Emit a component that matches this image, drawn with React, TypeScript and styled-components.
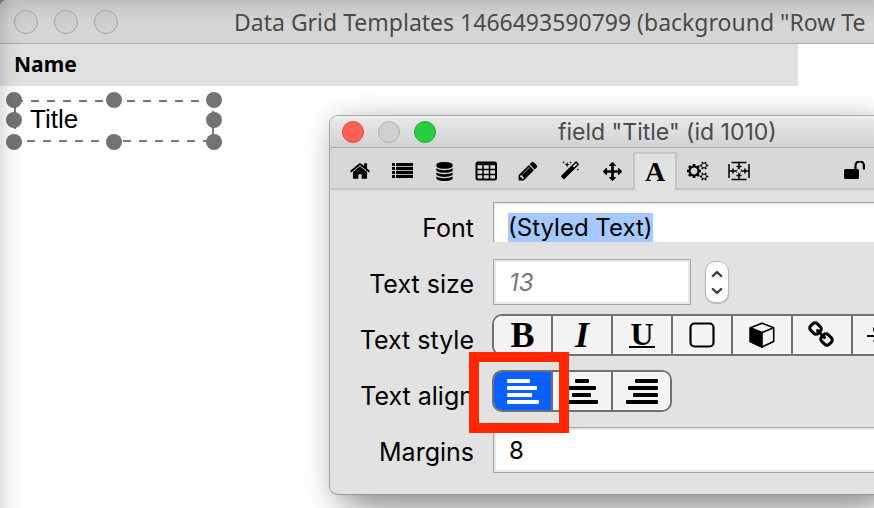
import React, { useEffect, useRef } from "react";
import styled, { createGlobalStyle } from "styled-components";

const GlobalStyle = createGlobalStyle`
  * { box-sizing: border-box; }
  html, body { margin: 0; padding: 0; }
  body { background: #777; font-family: Inter, "Liberation Sans", sans-serif; }
  button, input { font-family: inherit; margin: 0; }
`;

const Window = styled.main`
  position: relative;
  min-height: 100vh;
  overflow: clip;
  background: #fff;
  border-top-left-radius: 8px;
`;

const EdgeShade = styled.div`
  position: absolute;
  inset: 0 auto 0 0;
  width: 24px;
  background: linear-gradient(90deg, rgba(0, 0, 0, 0.12), rgba(0, 0, 0, 0.04) 40%, rgba(0, 0, 0, 0));
  pointer-events: none;
`;

const TitleBar = styled.header`
  display: flex;
  align-items: center;
  height: 44px;
  padding-left: 14px;
  background: linear-gradient(#bfbfbf, #cccccc 25%, #d6d6d6 60%, #d4d4d4);
  border-bottom: 1px solid #a9a9a9;
`;

const Lights = styled.div<{ $gap: number }>`
  display: flex;
  flex: none;
  gap: ${(p) => p.$gap}px;
`;

const Light = styled.button<{ $size: number; $fill: string; $edge: string }>`
  width: ${(p) => p.$size}px;
  height: ${(p) => p.$size}px;
  padding: 0;
  border-radius: 50%;
  border: 1px solid ${(p) => p.$edge};
  background: ${(p) => p.$fill};
`;

const WindowTitle = styled.h1`
  margin: 0 0 0 116px;
  font: 400 23px/32px "Noto Sans", sans-serif;
  color: #4a4a4a;
  white-space: nowrap;
`;

const ColumnHeader = styled.div`
  height: 42px;
  margin-right: 76px;
  padding-left: 14px;
  background: #e0e0e0;
  font: 700 21px/40px "Noto Sans", sans-serif;
  color: #000;
`;

const SelectedField = styled.div`
  position: relative;
  width: 222px;
  padding: 18px 0 0 30px;
  font: 400 26px/30px "Liberation Sans", sans-serif;
  color: #000;
`;

const Handles = styled.svg`
  position: absolute;
  top: 0;
  left: 0;
`;

const Palette = styled.section`
  position: absolute;
  top: 115px;
  left: 329px;
  right: 0;
  border: 1px solid #a6a6a6;
  border-right: 0;
  border-bottom-color: #949494;
  border-radius: 9px 0 0 9px;
  background: #e2e2e2;
  box-shadow: 20px 14px 34px rgba(0, 0, 0, 0.34), 0 6px 28px rgba(0, 0, 0, 0.2);
`;

const PaletteBar = styled.header`
  display: flex;
  align-items: center;
  height: 32px;
  padding-left: 12px;
  border-top-left-radius: 8px;
  border-bottom: 1px solid #a9a9a9;
  background: linear-gradient(#f2f2f2, #e8e8e8 10%, #d2d2d2);
`;

const PaletteTitle = styled.h2`
  margin: 0 0 0 122px;
  font-weight: 400;
  font-size: 23px;
  line-height: 28px;
  color: #4a4a4a;
  white-space: nowrap;
`;

const Toolbar = styled.nav`
  display: flex;
  align-items: flex-end;
  height: 42px;
  padding-left: 9px;
  background: #d8d8d8;
  box-shadow: inset 0 -2px #c4c4c4;
`;

const Tool = styled.button<{ $active?: boolean; $gapBefore?: number }>`
  display: flex;
  align-items: center;
  justify-content: center;
  flex: none;
  width: ${(p) => (p.$active ? 44 : 42)}px;
  height: 38px;
  margin-left: ${(p) => p.$gapBefore ?? 0}px;
  padding: 0;
  color: #000;
  border: ${(p) => (p.$active ? "2px solid #c4c4c4" : "0")};
  border-bottom: 0;
  background: ${(p) => (p.$active ? "#e2e2e2" : "transparent")};
`;

const SerifGlyph = styled.span<{ $size: number; $italic?: boolean }>`
  font: ${(p) => (p.$italic ? "italic" : "normal")} 700 ${(p) => p.$size}px/30px "Liberation Serif", serif;
`;

const UnderlinedGlyph = styled(SerifGlyph)`
  width: 26px;
  line-height: 24px;
  border-bottom: 2px solid #000;
`;

const Form = styled.form`
  padding: 9px 0 15px;
`;

const Row = styled.div<{ $top: number }>`
  display: grid;
  grid-template-columns: 144px 1fr;
  column-gap: 19px;
  align-items: start;
  height: 56px;
  padding-top: ${(p) => p.$top}px;
`;

const Label = styled.label<{ $top: number }>`
  font-size: 25px;
  line-height: 58px;
  margin-top: -${(p) => p.$top}px;
  text-align: right;
  white-space: nowrap;
  color: #000;
`;

const Field = styled.input<{ $width?: string }>`
  width: ${(p) => p.$width ?? "100%"};
  height: 46px;
  padding: 0 15px;
  border: 1px solid #a5a5a5;
  border-radius: 0;
  outline: none;
  background: #fff;
  box-shadow: inset 0 0 0 2px #e6e6e6;
  font-size: 24px;
  color: #000;
  &::placeholder { color: #777; font-style: italic; opacity: 1; }
`;

const WideField = styled(Field)`
  border-right: 0;
  box-shadow: inset 2px 2px #e6e6e6, inset 0 -2px #e6e6e6;
`;

const FontField = styled(Field)`
  height: 40px;
  padding: 9px 14px 0;
  border-bottom: 0;
  border-right: 0;
  box-shadow: inset 1px 1px #e6e6e6;
  line-height: 30px;
  caret-color: transparent;
  &::selection { background: #a5c9ff; color: #000; }
`;

const Inline = styled.div`
  display: flex;
  align-items: center;
  gap: 14px;
`;

const Stepper = styled.div`
  display: flex;
  flex-direction: column;
  width: 24px;
  height: 42px;
  padding: 3px 0;
  border: 1px solid #b9b9b9;
  border-radius: 10px;
  background: #fff;
  box-shadow: 0 1px 1px rgba(0, 0, 0, 0.2);
`;

const StepButton = styled.button`
  display: flex;
  flex: 1;
  align-items: center;
  justify-content: center;
  padding: 0;
  border: 0;
  background: transparent;
`;

const Segments = styled.div`
  display: flex;
  width: max-content;
  height: 42px;
  margin-left: -1px;
  border: 2px solid #707070;
  border-radius: 10px;
  overflow: hidden;
`;

const Segment = styled.button<{ $on?: boolean }>`
  display: flex;
  align-items: center;
  justify-content: center;
  width: 60px;
  padding: 0;
  border: 0;
  border-left: 2px solid #707070;
  background: ${(p) => (p.$on ? "#0a60ff" : "#f4f4f4")};
  color: ${(p) => (p.$on ? "#fff" : "#000")};
  &:first-child { width: 57px; border-left: 0; }
  &:last-child { width: 59px; }
`;

const Callout = styled.div`
  position: absolute;
  top: 352px;
  left: 469px;
  width: 100px;
  height: 81px;
  border: 10px solid #ff2600;
  pointer-events: none;
`;

const paths = {
  home: "M1472 992v480q0 26-19 45t-45 19h-384v-384h-256v384h-384q-26 0-45-19t-19-45v-480q0-1 .5-3t.5-3l575-474 575 474q1 2 1 6zm223-69l-62 74q-8 9-21 11h-3q-13 0-21-7l-692-577-692 577q-12 8-24 7-13-2-21-11l-62-74q-8-10-7-23.5t11-21.5l719-599q32-26 76-26t76 26l244 204v-195q0-14 9-23t23-9h192q14 0 23 9t9 23v408l219 182q10 8 11 21.5t-7 23.5z",
  database: "M896 768q237 0 443-43t325-127v170q0 69-103 128t-280 93.500-385 34.500-385-34.500-280-93.500-103-128v-170q119 84 325 127t443 43zm0 768q237 0 443-43t325-127v170q0 69-103 128t-280 93.500-385 34.500-385-34.500-280-93.500-103-128v-170q119 84 325 127t443 43zm0-384q237 0 443-43t325-127v170q0 69-103 128t-280 93.500-385 34.500-385-34.500-280-93.500-103-128v-170q119 84 325 127t443 43zm0-1152q208 0 385 34.500t280 93.500 103 128v128q0 69-103 128t-280 93.500-385 34.500-385-34.500-280-93.500-103-128v-128q0-69 103-128t280-93.500 385-34.500z",
  pencil: "M491 1536l91-91-235-235-91 91v107h128v128h107zm523-928q0-22-22-22-10 0-17 7l-542 542q-7 7-7 17 0 22 22 22 10 0 17-7l542-542q7-7 7-17zm-54-192l416 416-832 832h-416v-416zm683 96q0 53-37 90l-166 166-416-416 166-165q36-38 90-38 53 0 91 38l235 234q37 39 37 91z",
  wand: "M1254 581l293-293-107-107-293 293zm447-293q0 27-18 45l-1286 1286q-18 18-45 18t-45-18l-198-198q-18-18-18-45t18-45l1286-1286q18-18 45-18t45 18l198 198q18 18 18 45zm-1351-190l98 30-98 30-30 98-30-98-98-30 98-30 30-98zm350 162l196 60-196 60-60 196-60-196-196-60 196-60 60-196zm930 478l98 30-98 30-30 98-30-98-98-30 98-30 30-98zm-640-640l98 30-98 30-30 98-30-98-98-30 98-30 30-98z",
  move: "M1792 896q0 26-19 45l-256 256q-19 19-45 19t-45-19-19-45v-128h-384v384h128q26 0 45 19t19 45-19 45l-256 256q-19 19-45 19t-45-19l-256-256q-19-19-19-45t19-45 45-19h128v-384h-384v128q0 26-19 45t-45 19-45-19l-256-256q-19-19-19-45t19-45l256-256q19-19 45-19t45 19 19 45v128h384v-384h-128q-26 0-45-19t-19-45 19-45l256-256q19-19 45-19t45 19l256 256q19 19 19 45t-19 45-45 19h-128v384h384v-128q0-26 19-45t45-19 45 19l256 256q19 19 19 45z",
  link: "M1456 1216q0-40-28-68l-208-208q-28-28-68-28-42 0-72 32 3 3 19 18.500t21.500 21.500 15 19 13 25.500 3.500 27.500q0 40-28 68t-68 28q-15 0-27.500-3.500t-25.500-13-19-15-21.500-21.500-18.500-19q-33 31-33 73 0 40 28 68l206 207q27 27 68 27 40 0 68-26l147-146q28-28 28-67zm-703-705q0-40-28-68l-206-207q-28-28-68-28-39 0-68 27l-147 146q-28 28-28 67 0 40 28 68l208 208q27 27 68 27 42 0 72-31-3-3-19-18.500t-21.500-21.500-15-19-13-25.500-3.500-27.500q0-40 28-68t68-28q15 0 27.500 3.500t25.500 13 19 15 21.500 21.500 18.500 19q33-31 33-73zm895 705q0 120-85 203l-147 146q-83 83-203 83-121 0-204-85l-206-207q-83-83-83-203 0-123 88-209l-88-88q-86 88-208 88-120 0-204-84l-208-208q-84-84-84-204t85-203l147-146q83-83 203-83 121 0 204 85l206 207q83 83 83 203 0 123-88 209l88 88q86-88 208-88 120 0 204 84l208 208q84 84 84 204z",
};

const Glyph = ({ name, size }: { name: keyof typeof paths; size: number }) => (
  <svg width={size} height={size} viewBox="0 0 1792 1792" fill="currentColor" aria-hidden="true">
    <path d={paths[name]} />
  </svg>
);

const ListIcon = () => (
  <svg width="22" height="18" viewBox="0 0 22 18" aria-hidden="true">
    <path d="M5 4.500h17M5 8.500h17M5 12.500h17" stroke="#a9b0ac" strokeWidth="2" />
    {[1, 5, 9, 13].map((y) => (
      <g key={y}>
        <rect x="1" y={y} width="3" height="3" />
        <rect x="5" y={y} width="17" height="3" />
      </g>
    ))}
  </svg>
);

const TableIcon = () => (
  <svg width="22" height="20" viewBox="0 0 22 20" fill="none" stroke="#000" strokeWidth="1.500" aria-hidden="true">
    <rect x="1.500" y="1.500" width="19.500" height="17" rx="1.500" strokeWidth="2" />
    <path d="M2 3.200h19" strokeWidth="2" />
    <path d="M2 8.500h19M2 13.500h19M8 4v14M14.500 4v14" />
  </svg>
);

const Gear = ({ x, y, r, teeth, hub }: { x: number; y: number; r: number; teeth: number; hub: number }) => (
  <g transform={`translate(${x} ${y})`} fill="none" stroke="#000">
    <circle r={(r + hub) / 2 - 0.3} strokeWidth={r - hub - 0.6} />
    {Array.from({ length: teeth }, (_, i) => (
      <path
        key={i}
        d={`M0 ${-r + 1.4}V${-r - 0.8}`}
        strokeWidth={r * 0.44}
        transform={`rotate(${(360 / teeth) * i + (teeth === 6 ? 30 : 0)})`}
      />
    ))}
  </g>
);

const GearsIcon = () => (
  <svg width="22" height="20" viewBox="0 0 22 20" aria-hidden="true">
    <Gear x={7} y={10} r={6.2} teeth={8} hub={3.4} />
    <Gear x={17} y={4.5} r={3.5} teeth={6} hub={2} />
    <Gear x={17} y={15.5} r={3.5} teeth={6} hub={2} />
  </svg>
);

const ResizeIcon = () => (
  <svg width="24" height="20" viewBox="0 0 24 20" fill="none" stroke="#000" strokeWidth="1.500" aria-hidden="true">
    <path d="M3.500 1.500h15M3.500 18.500h15M1 3v14M21 3v14" />
    <path d="M1 10h8M13 10h8M11 2v6M11 12v6" />
    <path d="M5 7.500v5M17 7.500v5M8.500 5.500h5M8.500 14.500h5" />
    <rect x="9" y="8" width="4" height="4" strokeWidth="1" stroke="#555" strokeDasharray="1 1" />
  </svg>
);

const UnlockIcon = () => (
  <svg width="22" height="20" viewBox="0 0 22 20" aria-hidden="true">
    <rect x="1" y="8" width="15" height="10" rx="1.500" />
    <path d="M12.500 9V4.500a4.200 4.200 0 0 1 8.400 0v3.200" fill="none" stroke="#000" strokeWidth="2.200" strokeLinecap="round" />
  </svg>
);

const BoxIcon = () => (
  <svg width="26" height="26" viewBox="0 0 26 26" aria-hidden="true">
    <rect x="1.500" y="1.500" width="23" height="23" rx="4" fill="none" stroke="#000" strokeWidth="2.200" />
  </svg>
);

const CubeIcon = () => (
  <svg width="26" height="26" viewBox="0 0 26 26" fill="none" stroke="#000" strokeWidth="1.600" strokeLinejoin="round" aria-hidden="true">
    <path d="M13 1.200L24.700 5.800V19.500L13 25L1.300 19.500V5.800Z" />
    <path d="M1.300 5.800L13 10.500V25L1.300 19.500Z" fill="#000" />
    <path d="M13 10.500L24.700 5.800" />
  </svg>
);

const StrikeIcon = () => (
  <svg width="30" height="28" viewBox="0 0 30 28" fill="none" stroke="#000" aria-hidden="true">
    <path d="M0 15h30" strokeWidth="2" />
    <path d="M22 4v5M22 7C20 3 9 2 7 8c0 4 5 6 9 7 7 2 7 10-1 10-5 0-7-3-8-6" strokeWidth="2" />
  </svg>
);

const alignBars: Record<string, number[][]> = {
  left: [[0, 23], [0, 30], [0, 25], [0, 32]],
  center: [[9, 14], [2, 28], [6, 19], [0, 32]],
  right: [[9, 23], [2, 30], [7, 25], [0, 32]],
};

const AlignIcon = ({ kind }: { kind: string }) => (
  <svg width="32" height="25" viewBox="0 0 32 25" fill="currentColor" aria-hidden="true">
    {alignBars[kind].map(([x, w], i) => (
      <rect key={i} x={x} y={i * 7} width={w} height="4" rx="1" />
    ))}
  </svg>
);

const Chevron = ({ up }: { up?: boolean }) => (
  <svg width="12" height="8" viewBox="0 0 12 8" fill="none" stroke="#3c3c3c" strokeWidth="2.400" strokeLinecap="round" strokeLinejoin="round" aria-hidden="true">
    <path d={up ? "M1.800 6L6 2l4.200 4" : "M1.800 2L6 6l4.200-4"} />
  </svg>
);

const handlePoints = [
  [14, 14], [114, 14], [214, 14],
  [14, 34], [214, 34],
  [14, 56], [114, 56], [214, 56],
];

export default function App() {
  const fontRef = useRef<HTMLInputElement>(null);
  useEffect(() => {
    fontRef.current?.focus({ preventScroll: true });
    fontRef.current?.select();
  }, []);

  return (
    <>
      <GlobalStyle />
      <Window>
        <TitleBar>
          <Lights $gap={16}>
            {["Close", "Minimize", "Zoom"].map((n) => (
              <Light key={n} type="button" aria-label={n} $size={24} $fill="linear-gradient(#c8c8c8, #d2d2d2)" $edge="#a2a2a2" />
            ))}
          </Lights>
          <WindowTitle>Data Grid Templates 1466493590799 (background "Row Te</WindowTitle>
        </TitleBar>
        <ColumnHeader>Name</ColumnHeader>
        <SelectedField>
          Title
          <Handles width="226" height="68" viewBox="0 0 226 68" aria-hidden="true">
            <g fill="none" stroke="#7b7878" strokeWidth="2">
              <path d="M15 15H213" strokeDasharray="8 8" />
              <path d="M11 55H213" strokeDasharray="8 8" />
              <path d="M15 20V43M213 25V55" />
            </g>
            {handlePoints.map(([x, y]) => (
              <circle key={`${x}-${y}`} cx={x} cy={y} r="8" fill="#767272" />
            ))}
          </Handles>
        </SelectedField>
        <EdgeShade />

        <Palette>
          <PaletteBar>
            <Lights $gap={14}>
              <Light type="button" aria-label="Close palette" $size={22} $fill="#ff6058" $edge="#e2483f" />
              <Light type="button" aria-label="Minimize palette" $size={22} $fill="#d0d0d0" $edge="#aeaeae" />
              <Light type="button" aria-label="Zoom palette" $size={22} $fill="#28cd41" $edge="#1eac2c" />
            </Lights>
            <PaletteTitle>field "Title" (id 1010)</PaletteTitle>
          </PaletteBar>
          <Toolbar>
            <Tool type="button" aria-label="Basic"><Glyph name="home" size={22} /></Tool>
            <Tool type="button" aria-label="Contents"><ListIcon /></Tool>
            <Tool type="button" aria-label="Custom properties"><Glyph name="database" size={19} /></Tool>
            <Tool type="button" aria-label="Table"><TableIcon /></Tool>
            <Tool type="button" aria-label="Colors"><Glyph name="pencil" size={22} /></Tool>
            <Tool type="button" aria-label="Effects"><Glyph name="wand" size={20} /></Tool>
            <Tool type="button" aria-label="Position"><Glyph name="move" size={19} /></Tool>
            <Tool type="button" $active><SerifGlyph $size={28}>A</SerifGlyph></Tool>
            <Tool type="button" aria-label="Advanced"><GearsIcon /></Tool>
            <Tool type="button" aria-label="Geometry"><ResizeIcon /></Tool>
            <Tool type="button" aria-label="Unlock" $gapBefore={72}><UnlockIcon /></Tool>
          </Toolbar>
          <Form>
            <Row $top={3}>
              <Label htmlFor="font" $top={3}>Font</Label>
              <FontField id="font" ref={fontRef} defaultValue="(Styled Text)" />
            </Row>
            <Row $top={4}>
              <Label htmlFor="size" $top={4}>Text size</Label>
              <Inline>
                <Field id="size" placeholder="13" $width="198px" />
                <Stepper>
                  <StepButton type="button" aria-label="Increase"><Chevron up /></StepButton>
                  <StepButton type="button" aria-label="Decrease"><Chevron /></StepButton>
                </Stepper>
              </Inline>
            </Row>
            <Row $top={3}>
              <Label as="span" id="style" $top={3}>Text style</Label>
              <Segments role="group" aria-labelledby="style">
                <Segment type="button"><SerifGlyph $size={36}>B</SerifGlyph></Segment>
                <Segment type="button"><SerifGlyph $size={36} $italic>I</SerifGlyph></Segment>
                <Segment type="button"><UnderlinedGlyph $size={32}>U</UnderlinedGlyph></Segment>
                <Segment type="button" aria-label="Box"><BoxIcon /></Segment>
                <Segment type="button" aria-label="3D box"><CubeIcon /></Segment>
                <Segment type="button" aria-label="Link"><Glyph name="link" size={28} /></Segment>
                <Segment type="button" aria-label="Strikeout"><StrikeIcon /></Segment>
              </Segments>
            </Row>
            <Row $top={3}>
              <Label as="span" id="align" $top={3}>Text align</Label>
              <Segments role="group" aria-labelledby="align">
                <Segment type="button" aria-label="Align left" aria-pressed="true" $on><AlignIcon kind="left" /></Segment>
                <Segment type="button" aria-label="Align center"><AlignIcon kind="center" /></Segment>
                <Segment type="button" aria-label="Align right"><AlignIcon kind="right" /></Segment>
              </Segments>
            </Row>
            <Row $top={4}>
              <Label htmlFor="margins" $top={4}>Margins</Label>
              <WideField id="margins" defaultValue="8" />
            </Row>
          </Form>
        </Palette>
        <Callout />
      </Window>
    </>
  );
}
